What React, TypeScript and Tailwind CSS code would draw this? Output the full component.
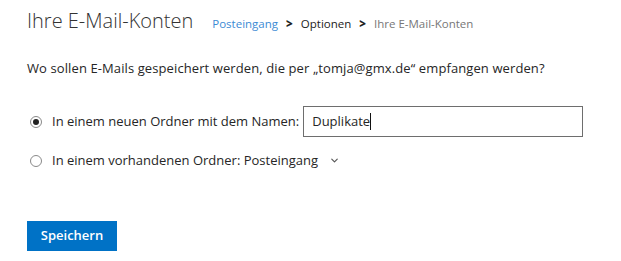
import { ChevronDown } from "lucide-react";

const font = { fontFamily: '"Open Sans", "Noto Sans", sans-serif' };

const Radio = (props: { checked?: boolean }) => (
  <span className="flex h-[12px] w-[12px] shrink-0 items-center justify-center rounded-full border border-[#8a8a8a] bg-white">
    {props.checked && <span className="h-[6px] w-[6px] rounded-full bg-[#222]" />}
  </span>
);

export default function App() {
  return (
    <div
      className="h-[261px] w-[621px] bg-white pl-[27px] text-[13px] text-[#262626]"
      style={font}
    >
      <div className="flex items-baseline pt-[7px]">
        <h1 className="text-[20px] font-light leading-[28px] text-[#333]">
          Ihre E-Mail-Konten
        </h1>
        <nav className="ml-[19px] flex items-baseline gap-[8px] text-[11.5px]">
          <span className="text-[#3c8bd4]">Posteingang</span>
          <span className="font-extrabold text-[#222]">&gt;</span>
          <span className="text-[#222]">Optionen</span>
          <span className="font-extrabold text-[#222]">&gt;</span>
          <span className="text-[#777]">Ihre E-Mail-Konten</span>
        </nav>
      </div>

      <p className="mt-[24px] leading-[18px] tracking-[0.1px]">
        Wo sollen E-Mails gespeichert werden, die per „tomja@gmx.de“ empfangen werden?
      </p>

      <div className="mt-[29px] flex items-center">
        <span className="ml-[3px]">
          <Radio checked />
        </span>
        <span className="ml-[10px]">In einem neuen Ordner mit dem Namen:</span>
        <div className="ml-[4px] flex h-[31px] w-[280px] items-center border border-[#6e6e6e] pl-[8px]">
          <span>Duplikate</span>
          <span className="h-[17px] w-px bg-[#111]" />
        </div>
      </div>

      <div className="mt-[14px] flex items-center">
        <span className="ml-[3px]">
          <Radio />
        </span>
        <span className="ml-[10px]">In einem vorhandenen Ordner: Posteingang</span>
        <ChevronDown className="ml-[11px] h-[11px] w-[11px] text-[#555]" strokeWidth={2.5} />
      </div>

      <button className="mt-[50px] h-[30px] w-[90px] bg-[#0072c6] text-[13px] font-semibold text-white">
        Speichern
      </button>
    </div>
  );
}
